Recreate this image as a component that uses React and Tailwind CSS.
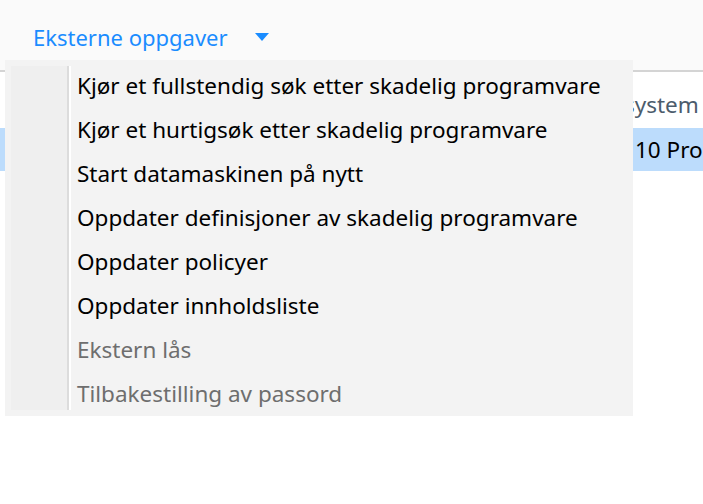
import React from 'react';

const items = [
  { label: 'Kjør et fullstendig søk etter skadelig programvare', enabled: true },
  { label: 'Kjør et hurtigsøk etter skadelig programvare', enabled: true },
  { label: 'Start datamaskinen på nytt', enabled: true },
  { label: 'Oppdater definisjoner av skadelig programvare', enabled: true },
  { label: 'Oppdater policyer', enabled: true },
  { label: 'Oppdater innholdsliste', enabled: true },
  { label: 'Ekstern lås', enabled: false },
  { label: 'Tilbakestilling av passord', enabled: false },
];

// --- dropdown with the remote tasks ---
const TaskMenu = () => (
  <div className="absolute left-[5px] top-[60px] w-[628px] h-[356px] bg-[#f3f3f3] flex">
    <div className="ml-[6px] my-[6px] w-[56px] bg-[#efefef]" />
    <div className="my-[6px] w-[2px] bg-[#dcdcdc]" />
    <div className="my-[6px] w-[2px] bg-white" />
    <ul className="pt-[4px] pl-[6px]">
      {items.map(item => (
        <li
          key={item.label}
          className={`h-[44px] flex items-center text-[22.5px] whitespace-nowrap ${item.enabled ? 'text-black' : 'text-[#6e6e6e]'}`}
        >
          {item.label}
        </li>
      ))}
    </ul>
  </div>
);

export default function App() {
  return (
    <div className="relative w-[703px] h-[504px] overflow-hidden bg-white" style={{ fontFamily: '"Noto Sans", "Open Sans", sans-serif' }}>
      <div className="h-[72px] bg-[#fafafa] border-b-2 border-[#d4d4d4] flex items-center px-[33px] pt-[4px]">
        <span className="text-[22px] text-[#1a8cff]">Eksterne oppgaver</span>
        <svg width="14" height="8" viewBox="0 0 14 8" className="ml-[27px] mt-[0px]">
          <path d="M0 0 H14 L7 8 Z" fill="#1a8cff" />
        </svg>
      </div>
      <div className="pt-[10px]">
        <div className="h-[46px] flex items-center pl-[533px] text-[22.5px] text-[#4c5c6c] whitespace-nowrap">
          Operativsystem
        </div>
        <div className="h-[43px] flex items-center pl-[533px] text-[22.5px] text-black bg-[#bcdcfc] whitespace-nowrap">
          Windows 10 Pro
        </div>
      </div>
      <TaskMenu />
    </div>
  );
}
